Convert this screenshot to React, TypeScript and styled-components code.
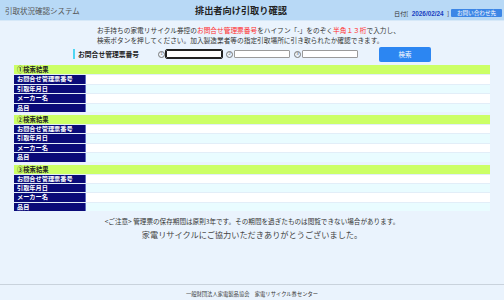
import { Fragment, type FC } from "react";
import styled, { createGlobalStyle } from "styled-components";

const GlobalStyle = createGlobalStyle`
  html, body {
    margin: 0;
    padding: 0;
    background: #eaf3fd;
  }
  body {
    font-family: "Noto Sans CJK JP", "Liberation Sans", sans-serif;
    color: #333;
  }
`;

const Page = styled.div`
  display: flex;
  flex-direction: column;
  min-height: 300px;
  width: 504px;
`;

const Header = styled.header`
  display: grid;
  grid-template-columns: 195px auto 1fr;
  align-items: center;
  height: 21px;
  background: #b8d9f6;
  border-bottom: 1px solid #d6e8f8;
  box-sizing: border-box;
`;

const SystemName = styled.div`
  padding-left: 5px;
  font-size: 7.5px;
  color: #555;
`;

const PageTitle = styled.h1`
  margin: 0;
  font-size: 9.2px;
  font-weight: bold;
  color: #222;
`;

const HeaderRight = styled.div`
  display: flex;
  align-items: center;
  justify-content: flex-end;
  gap: 2px;
  padding: 6px 2px 0 0;
  font-size: 6.2px;
  line-height: 9px;
  color: #333;
  white-space: nowrap;
`;

const DateText = styled.div`
  flex-shrink: 0;
  width: 55px;
  display: flex;
  align-items: center;
  justify-content: space-between;
`;

const DateValue = styled.span`
  font-family: "Liberation Sans", sans-serif;
  font-size: 6.4px;
  color: #1a3fc0;
  font-weight: bold;
`;

const ContactButton = styled.span`
  flex-shrink: 0;
  display: inline-flex;
  align-items: center;
  justify-content: center;
  width: 51px;
  height: 8px;
  background: #3c86e6;
  color: #fff;
  font-size: 5.6px;
  border-radius: 1px;
`;

const Main = styled.main`
  display: flex;
  flex-direction: column;
  align-items: center;
  padding-top: 5px;
`;

const Lead = styled.div`
  width: 310px;
  font-size: 6.7px;
  line-height: 9.7px;
  color: #333;
  white-space: nowrap;
`;

const Em = styled.span`
  color: #ff2a2a;
`;

const SearchRow = styled.div`
  display: flex;
  align-items: center;
  margin-top: 1px;
  height: 16px;
`;

const FieldLabel = styled.div`
  width: 85px;
  box-sizing: border-box;
  border-left: 2px solid #4fd6f2;
  padding-left: 3px;
  height: 10px;
  line-height: 10px;
  font-size: 6.8px;
  font-weight: bold;
  color: #222;
`;

const NumSlot = styled.span<{ $first?: boolean }>`
  display: inline-flex;
  align-items: center;
  width: 8px;
  height: 8px;
  margin-left: ${(p) => (p.$first ? "0" : "4px")};
`;

const NumCircle = styled.span`
  display: inline-flex;
  align-items: center;
  justify-content: center;
  width: 5.4px;
  height: 5.4px;
  border: 0.5px solid #777;
  border-radius: 50%;
  font-family: "Liberation Sans", sans-serif;
  font-size: 4px;
  line-height: 1;
  color: #555;
`;

const CodeInput = styled.input<{ $focused?: boolean }>`
  width: 56px;
  height: 8px;
  box-sizing: border-box;
  padding: 0;
  margin: 0;
  background: #fff;
  border: 1px solid ${(p) => (p.$focused ? "#222" : "#9a9a9a")};
  outline: ${(p) => (p.$focused ? "0.5px solid #222" : "none")};
  border-radius: 1px;
`;

const SearchButton = styled.button`
  margin-left: 21px;
  width: 52px;
  height: 15px;
  border: none;
  border-radius: 2px;
  background: #2c86f2;
  color: #fff;
  font-family: inherit;
  font-size: 6.5px;
  padding: 0;
`;

const Results = styled.div`
  display: flex;
  flex-direction: column;
  gap: 3px;
  margin-top: 3px;
  width: 476px;
`;

const Section = styled.section`
  display: flex;
  flex-direction: column;
`;

const SectionHead = styled.div`
  height: 9px;
  line-height: 9px;
  background: #ccff66;
  font-size: 6.3px;
  font-weight: bold;
  color: #222;
  padding-left: 3px;
`;

const Row = styled.div`
  display: grid;
  grid-template-columns: 72px 1fr;
  height: 9.4px;
  border-top: 1px solid #e2eef8;
  box-sizing: border-box;
`;

const RowLabel = styled.div`
  background: #0a0a78;
  color: #fff;
  font-size: 6.2px;
  font-weight: bold;
  line-height: 8.4px;
  padding-left: 3px;
  border-right: 1px solid #5c6cc0;
`;

const RowValue = styled.div<{ $alt: boolean }>`
  background: ${(p) => (p.$alt ? "#e9fcff" : "#ffffff")};
`;

const Notice = styled.p`
  margin: 6px 0 0;
  font-size: 6.6px;
  line-height: 9.6px;
  color: #333;
`;

const Thanks = styled.p`
  margin: 2px 0 0;
  font-size: 8.2px;
  line-height: 11.9px;
  color: #444;
`;

const Footer = styled.footer`
  margin-top: auto;
  height: 16px;
  padding-top: 2px;
  box-sizing: border-box;
  border-top: 1px solid #c9d2dc;
  display: flex;
  align-items: center;
  justify-content: center;
  font-size: 5.3px;
  color: #333;
`;

const fields = ["お問合せ管理票番号", "引取年月日", "メーカー名", "品目"];
const sections = ["①検索結果", "②検索結果", "③検索結果"];

const App: FC = () => {
  return (
    <Page>
      <GlobalStyle />
      <Header>
        <SystemName>引取状況確認システム</SystemName>
        <PageTitle>排出者向け引取り確認</PageTitle>
        <HeaderRight>
          <DateText>
            <span>日付[</span>
            <DateValue>2026/02/24</DateValue>
            <span>]</span>
          </DateText>
          <ContactButton>お問い合わせ先</ContactButton>
        </HeaderRight>
      </Header>
      <Main>
        <Lead>
          お手持ちの家電リサイクル券控の<Em>お問合せ管理票番号</Em>をハイフン「-」をのぞく<Em>半角１３桁</Em>で入力し、
          <br />
          検索ボタンを押してください。加入製造業者等の指定引取場所に引き取られたか確認できます。
        </Lead>
        <SearchRow>
          <FieldLabel>お問合せ管理票番号</FieldLabel>
          {[1, 2, 3].map((n) => (
            <Fragment key={n}>
              <NumSlot $first={n === 1}>
                <NumCircle>{n}</NumCircle>
              </NumSlot>
              <CodeInput $focused={n === 1} />
            </Fragment>
          ))}
          <SearchButton>検索</SearchButton>
        </SearchRow>
        <Results>
          {sections.map((s) => (
            <Section key={s}>
              <SectionHead>{s}</SectionHead>
              {fields.map((f, i) => (
                <Row key={f}>
                  <RowLabel>{f}</RowLabel>
                  <RowValue $alt={i % 2 === 1} />
                </Row>
              ))}
            </Section>
          ))}
        </Results>
        <Notice>
          &lt;ご注意&gt; 管理票の保存期間は原則3年です。その期間を過ぎたものは閲覧できない場合があります。
        </Notice>
        <Thanks>家電リサイクルにご協力いただきありがとうございました。</Thanks>
      </Main>
      <Footer>一般財団法人家電製品協会　家電リサイクル券センター</Footer>
    </Page>
  );
};

export default App;
